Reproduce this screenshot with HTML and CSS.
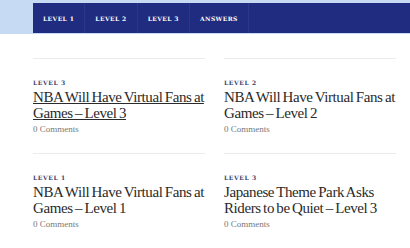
FILE: index.html
```html
<!DOCTYPE html>
<html lang="en">
<head>
    <meta charset="UTF-8">
    <title>Levels</title>
    <link rel="stylesheet" href="styles.css">
</head>
<body>

<header class="site-header">
    <nav class="main-nav">
        <a href="#">Level 1</a>
        <a href="#">Level 2</a>
        <a href="#">Level 3</a>
        <a href="#">Answers</a>
    </nav>
</header>

<main class="posts">
    <article class="post">
        <div class="post-cat">Level 3</div>
        <h2 class="post-title"><a href="#" class="hover">NBA Will Have Virtual Fans at Games &ndash; Level 3</a></h2>
        <div class="post-meta">0 Comments</div>
    </article>
    <article class="post">
        <div class="post-cat">Level 2</div>
        <h2 class="post-title"><a href="#">NBA Will Have Virtual Fans at Games &ndash; Level 2</a></h2>
        <div class="post-meta">0 Comments</div>
    </article>
    <article class="post">
        <div class="post-cat">Level 1</div>
        <h2 class="post-title"><a href="#">NBA Will Have Virtual Fans at Games &ndash; Level 1</a></h2>
        <div class="post-meta">0 Comments</div>
    </article>
    <article class="post">
        <div class="post-cat">Level 3</div>
        <h2 class="post-title"><a href="#">Japanese Theme Park Asks Riders to be Quiet &ndash; Level 3</a></h2>
        <div class="post-meta">0 Comments</div>
    </article>
</main>

</body>
</html>
```

FILE: styles.css
```css
body {
    margin: 0;
    font-family: "Liberation Serif", serif;
    background-color: #fff;
}

.site-header {
    background-color: #c7daf3;
    padding: 3px 0 1px 33px;
}

.main-nav {
    display: flex;
    background-color: #1f2c80;
    height: 30px;
}

.main-nav a {
    display: flex;
    align-items: center;
    padding: 0 10px;
    border-right: 1px solid #2a3889;
    color: #fff;
    text-decoration: none;
    text-transform: uppercase;
    font-family: "DejaVu Serif", serif;
    font-weight: bold;
    font-size: 6px;
    letter-spacing: 0.4px;
}

.posts {
    display: grid;
    grid-template-columns: 172px 172px;
    column-gap: 19px;
    margin: 24px 0 0 33px;
}

.post {
    border-top: 1px solid #ececec;
    padding-top: 20px;
    height: 74px;
}

.post-cat {
    font-family: "DejaVu Serif", serif;
    font-weight: bold;
    font-size: 6px;
    letter-spacing: 0.6px;
    text-transform: uppercase;
    color: #3b3f6e;
}

.post-title {
    margin: 3px 0 3px;
    font-size: 15px;
    font-weight: normal;
    line-height: 16px;
    letter-spacing: -0.4px;
    word-spacing: -1px;
}

.post-title a {
    color: #2a2a2a;
    text-decoration: none;
}

.post-title a.hover {
    text-decoration: underline;
}

.post-meta {
    font-size: 9px;
    color: #777;
}
```
